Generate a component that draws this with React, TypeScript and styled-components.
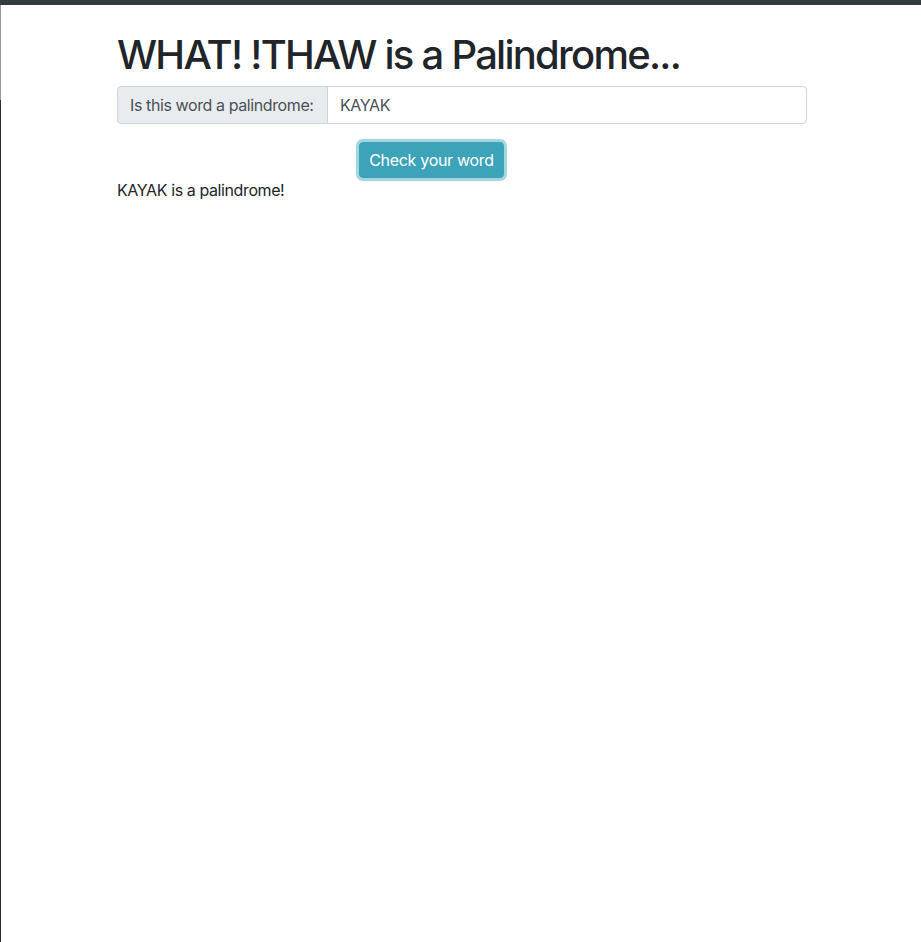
import React from "react";
import styled, { createGlobalStyle } from "styled-components";

const Global = createGlobalStyle`
  html, body { margin: 0; padding: 0; background: #fff; }
  body {
    font-family: Inter, "Noto Sans", "Liberation Sans", sans-serif;
    font-size: 16px;
    line-height: 1.5;
    letter-spacing: -0.4px;
    color: #212529;
    min-height: 942px;
    padding-left: 3px;
    box-sizing: border-box;
    background:
      linear-gradient(#9a9a9a, #9a9a9a) 0 0 / 1px 100px no-repeat,
      linear-gradient(#2a2d33, #2a2d33) 0 100px / 1px 100% no-repeat,
      #fff;
  }
  * { box-sizing: border-box; }
`;

const TopBar = styled.div`
  height: 5px;
  background: #343a40;
  margin-left: -3px;
`;

const Container = styled.main`
  width: 720px;
  margin: 0 auto;
  padding: 0 15px;
`;

const Title = styled.h1`
  margin: 26px 0 7px;
  font-size: 40px;
  font-weight: 500;
  line-height: 1.2;
  letter-spacing: -1.75px;
  color: #212529;
`;

const InputGroup = styled.div`
  display: flex;
  height: 38px;
`;

const Addon = styled.label`
  display: flex;
  align-items: center;
  padding: 0 12px;
  width: 211px;
  background: #e9ecef;
  border: 1px solid #ced4da;
  border-radius: 4px 0 0 4px;
  color: #495057;
  font-size: 16px;
  white-space: nowrap;
`;

const Field = styled.input`
  flex: 1;
  min-width: 0;
  height: 38px;
  margin-left: -1px;
  padding: 0 12px;
  border: 1px solid #ced4da;
  border-radius: 0 4px 4px 0;
  font: inherit;
  letter-spacing: inherit;
  color: #495057;
  outline: none;
`;

const ButtonRow = styled.div`
  display: flex;
  padding-left: 242px;
  margin-top: 18px;
`;

const Button = styled.button`
  height: 36px;
  width: 145px;
  padding: 0;
  background: #3ca3b9;
  border: 1px solid #3ca3b9;
  border-radius: 4px;
  color: #fff;
  font: inherit;
  letter-spacing: -0.3px;
  font-size: 16px;
  box-shadow: 0 0 0 3px rgba(140, 204, 214, 0.8);
  cursor: pointer;
`;

const Result = styled.p`
  margin: 0;
  font-size: 16px;
  color: #212529;
`;

export default function App() {
  return (
    <>
      <Global />
      <TopBar />
      <Container>
        <Title>WHAT! !THAW is a Palindrome...</Title>
        <InputGroup>
          <Addon htmlFor="word">Is this word a palindrome:</Addon>
          <Field id="word" defaultValue="KAYAK" />
        </InputGroup>
        <ButtonRow>
          <Button>Check your word</Button>
        </ButtonRow>
        <Result>KAYAK is a palindrome!</Result>
      </Container>
    </>
  );
}
